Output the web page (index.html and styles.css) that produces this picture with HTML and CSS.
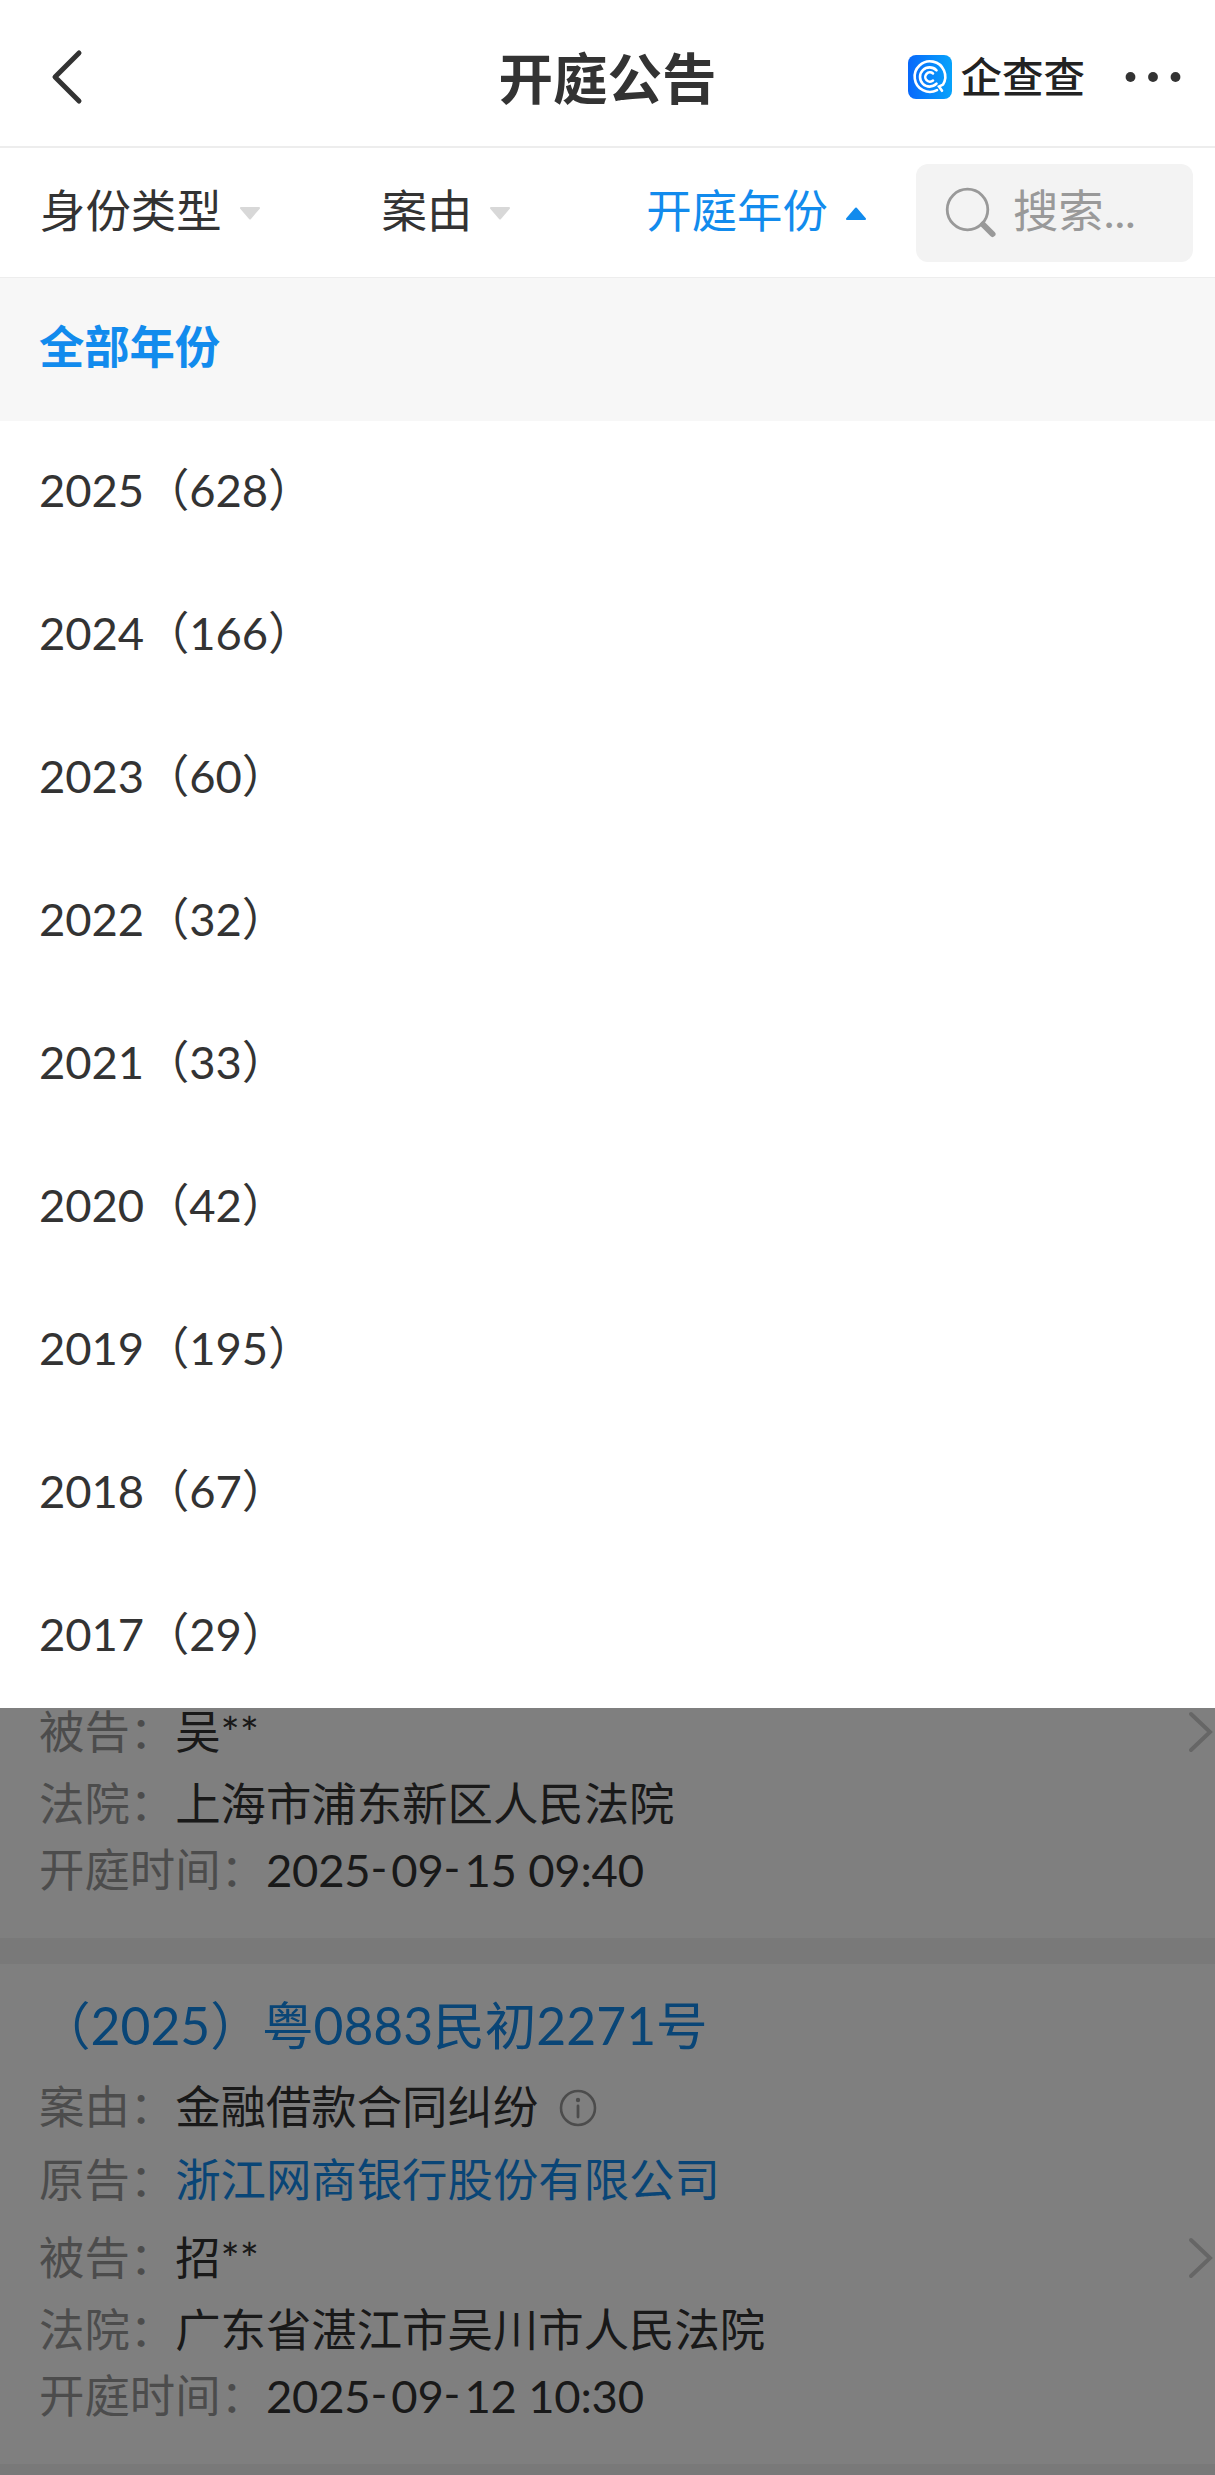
FILE: index.html
```html
<!DOCTYPE html>
<html lang="zh-CN">
<head>
    <meta charset="UTF-8">
    <meta name="viewport" content="width=device-width, initial-scale=1.0">
    <title>开庭公告</title>
    <link rel="stylesheet" href="styles.css">
</head>
<body>
    <header class="header">
        <div class="header-left">
            <svg class="back" width="32" height="56" viewBox="0 0 32 56">
                <path d="M28 4L4 28L28 52" fill="none" stroke="#333" stroke-width="5" stroke-linecap="round" stroke-linejoin="round"/>
            </svg>
        </div>
        <h1 class="title">开庭公告</h1>
        <div class="header-right">
            <svg class="logo" width="44" height="44" viewBox="0 0 44 44">
                <defs>
                    <linearGradient id="logo-bg" x1="0" y1="0" x2="1" y2="0">
                        <stop offset="0" stop-color="#0868fb"/>
                        <stop offset="1" stop-color="#07a3fb"/>
                    </linearGradient>
                </defs>
                <rect width="44" height="44" rx="8" fill="url(#logo-bg)"/>
                <g fill="none" stroke="#fff" stroke-width="2.6" stroke-linecap="round">
                    <path d="M29 35.2A15.3 15.3 0 1 1 35 29.6L31 31.5L34 35.8"/>
                    <path d="M28.5 15.3A9.6 9.6 0 1 0 28.5 28.7"/>
                    <path d="M25 18.4A4.7 4.7 0 1 0 25 25.6"/>
                </g>
            </svg>
            <span class="brand">企查查</span>
            <svg class="more" width="56" height="12" viewBox="0 0 56 12">
                <g fill="#333">
                    <circle cx="5.5" cy="6" r="4.9"/>
                    <circle cx="28" cy="6" r="4.9"/>
                    <circle cx="50.5" cy="6" r="4.9"/>
                </g>
            </svg>
        </div>
    </header>

    <nav class="filter">
        <div class="filter-item"><span>身份类型</span><svg class="arrow" width="22" height="13" viewBox="0 0 22 13"><path d="M2 1H20L11 11.5Z"/></svg></div>
        <div class="filter-item"><span>案由</span><svg class="arrow" width="22" height="13" viewBox="0 0 22 13"><path d="M2 1H20L11 11.5Z"/></svg></div>
        <div class="filter-item active"><span>开庭年份</span><svg class="arrow" width="22" height="13" viewBox="0 0 22 13"><path d="M2 12H20L11 1.5Z"/></svg></div>
        <div class="search">
            <svg width="52" height="52" viewBox="0 0 52 52" fill="none" stroke="#999">
                <circle cx="22.5" cy="22.5" r="20.3" stroke-width="2.8"/>
                <path d="M38 37.5L47.5 47" stroke-width="6" stroke-linecap="round"/>
            </svg>
            <span>搜索...</span>
        </div>
    </nav>

    <ul class="menu">
        <li class="selected">全部年份</li>
        <li>2025（628）</li>
        <li>2024（166）</li>
        <li>2023（60）</li>
        <li>2022（32）</li>
        <li>2021（33）</li>
        <li>2020（42）</li>
        <li>2019（195）</li>
        <li>2018（67）</li>
        <li>2017（29）</li>
    </ul>

    <main class="results">
        <section class="card first">
            <div class="row defendant">
                <span class="label">被告：</span><span>吴**</span>
                <svg class="more-arrow" width="26" height="44" viewBox="0 0 26 44"><path d="M4 4L23 22L4 40"/></svg>
            </div>
            <div class="row court"><span class="label">法院：</span><span>上海市浦东新区人民法院</span></div>
            <div class="row time"><span class="label">开庭时间：</span><span class="date">2025<i>-</i>09<i>-</i>15 09:40</span></div>
        </section>
        <section class="card">
            <h2 class="case-no">（2025）粤0883民初2271号</h2>
            <div class="row reason">
                <span class="label">案由：</span><span>金融借款合同纠纷</span>
                <svg class="info" width="38" height="38" viewBox="0 0 38 38">
                    <circle cx="19" cy="19" r="17" fill="none" stroke="#999" stroke-width="2.6"/>
                    <circle cx="19" cy="11" r="2.2" fill="#999"/>
                    <path d="M19 17V28" stroke="#999" stroke-width="2.8" stroke-linecap="round"/>
                </svg>
            </div>
            <div class="row plaintiff"><span class="label">原告：</span><span class="link">浙江网商银行股份有限公司</span></div>
            <div class="row defendant">
                <span class="label">被告：</span><span>招**</span>
                <svg class="more-arrow" width="26" height="44" viewBox="0 0 26 44"><path d="M4 4L23 22L4 40"/></svg>
            </div>
            <div class="row court"><span class="label">法院：</span><span>广东省湛江市吴川市人民法院</span></div>
            <div class="row time"><span class="label">开庭时间：</span><span class="date">2025<i>-</i>09<i>-</i>12 10:30</span></div>
        </section>
        <div class="mask"></div>
    </main>
</body>
</html>
```
FILE: styles.css
```css
* {
    box-sizing: border-box;
}
body {
    margin: 0;
    height: 2475px;
    display: flex;
    flex-direction: column;
    overflow: hidden;
    background: #fff;
    color: #333;
    font-family: Lato, "Noto Sans CJK SC", sans-serif;
    font-size: 45.4px;
    line-height: 60px;
}
svg {
    flex: none;
    display: block;
}

/* header */
.header {
    height: 148px;
    padding: 8px 34px 0 51px;
    display: grid;
    grid-template-columns: 1fr auto 1fr;
    align-items: center;
    border-bottom: 2px solid #ededed;
}
.title {
    margin: 2px 0 0 -17px;
    font-size: 54.5px;
    font-weight: bold;
}
.header-right {
    display: flex;
    align-items: center;
    justify-content: flex-end;
}
.brand {
    margin-left: 8px;
    font-size: 41.5px;
    font-weight: 500;
    color: #222;
}
.more {
    margin-left: 40px;
}

/* filter bar */
.filter {
    height: 130px;
    padding: 0 22px 0 40px;
    display: flex;
    align-items: center;
    border-bottom: 1px solid #ededed;
}
.filter-item {
    display: flex;
    align-items: center;
    margin-right: 121px;
    white-space: nowrap;
}
.filter-item span,
.search span {
    padding-bottom: 3px;
}
.filter-item:nth-child(2) {
    margin-right: 135px;
}
.filter-item.active {
    margin-right: 49px;
    color: #128bed;
}
.arrow {
    margin: 2px 0 0 17px;
    fill: #d8d8d8;
    stroke: #d8d8d8;
    stroke-width: 2;
    stroke-linejoin: round;
}
.active .arrow {
    fill: #128bed;
    stroke: #128bed;
}
.search {
    flex: 1;
    height: 98px;
    padding-left: 29px;
    display: flex;
    align-items: center;
    gap: 16px;
    border-radius: 12px;
    background: #f3f3f3;
    color: #999;
}

/* year menu */
.menu {
    margin: 0;
    padding: 0;
    list-style: none;
}
.menu li {
    height: 143px;
    padding: 0 39px 5px;
    display: flex;
    align-items: center;
    letter-spacing: -0.1px;
}
.menu .selected {
    background: #f7f7f7;
    color: #128bed;
    font-weight: bold;
}

/* result list */
.results {
    flex: 1;
    position: relative;
    overflow: hidden;
    background: #f3f3f3;
}
.card {
    margin-bottom: 26px;
    padding: 16px 0 33px 39px;
    background: #fff;
}
.row {
    display: flex;
    align-items: center;
}
.label {
    color: #999;
}
.link,
.case-no {
    color: #128bed;
}
.case-no {
    margin: 0;
    font-size: 51.6px;
    font-weight: normal;
    line-height: 90px;
}
.reason {
    height: 74px;
}
.plaintiff {
    height: 72px;
}
.defendant {
    height: 83px;
}
.court {
    height: 62px;
}
.time {
    height: 70px;
}
.card.first {
    padding-top: 0;
}
.first .defendant {
    height: 48px;
    margin-bottom: 17px;
    line-height: 48px;
}
.date {
    letter-spacing: -0.2px;
}
.date i {
    position: relative;
    top: -3px;
    font-style: normal;
    letter-spacing: 4px;
}
.info {
    margin: 2px 0 0 21px;
}
.more-arrow {
    margin-left: auto;
    margin-right: 2px;
    fill: none;
    stroke: #ccc;
    stroke-width: 4;
    stroke-linecap: round;
}
.mask {
    position: absolute;
    inset: 0;
    background: rgba(0, 0, 0, 0.5);
}
```
